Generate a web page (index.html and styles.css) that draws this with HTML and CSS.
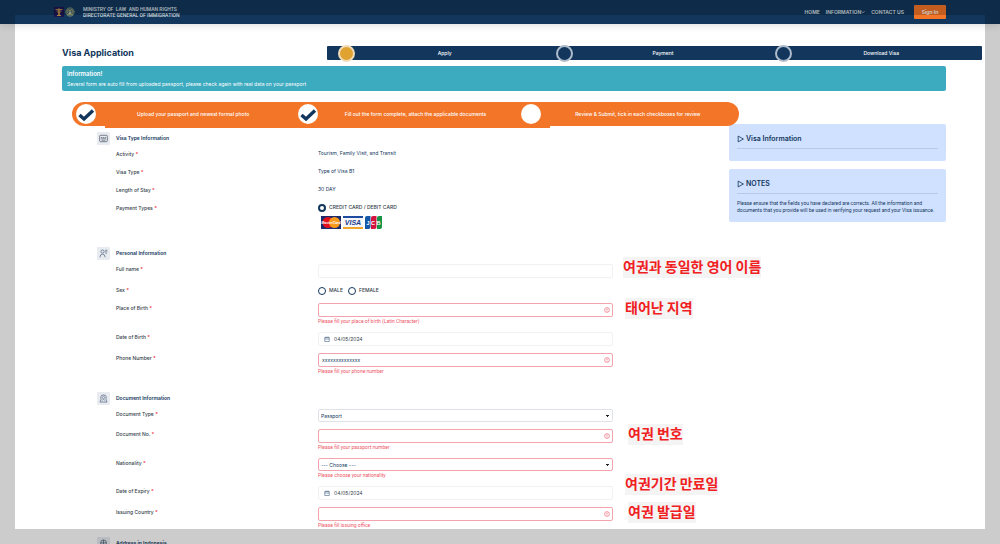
FILE: index.html
```html
<!DOCTYPE html>
<html lang="en">
<head>
<meta charset="utf-8">
<title>Visa Application</title>
<link rel="stylesheet" href="styles.css">
</head>
<body>
<svg class="defs" aria-hidden="true">
  <symbol id="alert" viewBox="0 0 12 12"><circle cx="6" cy="6" r="4.8" fill="none" stroke="#ee5566" stroke-width="1.2"/><path d="M6 3.2v3.4M6 7.6v1.3" stroke="#ee5566" stroke-width="1.4"/></symbol>
  <symbol id="calendar" viewBox="0 0 12 12"><path d="M1.5 3h9v8h-9zM1.5 6h9M4 1v3M8 1v3" fill="none" stroke="#33547a" stroke-width="1.1"/></symbol>
  <symbol id="check" viewBox="0 0 20 20"><path d="M3.500 11l4.500 4L17 6.500" fill="none" stroke="#12365c" stroke-width="3.400"/></symbol>
  <symbol id="play" viewBox="0 0 12 12"><path d="M2 1v10l9-5z" fill="none" stroke="#12365c" stroke-width="1.4" stroke-linejoin="round"/></symbol>
</svg>

<header class="topbar">
  <a class="brand" href="#">
    <svg class="crest" viewBox="0 0 20 20"><rect width="20" height="20" fill="#1c1650"/><path d="M10 2v16M3 5h14M5 8h10M6 17h8M7 11h6" stroke="#a5824a" stroke-width="2"/><path d="M8 5h4v12H8z" fill="#a5824a"/></svg>
    <svg class="crest" viewBox="0 0 20 20"><circle cx="10" cy="10" r="8.500" fill="#46636a" stroke="#7d8c74" stroke-width="1.500"/><path d="M4 9l3-4 3 3 3-3 3 4-3 4H7zM4 15h12" fill="none" stroke="#aaa86c" stroke-width="1.800"/><path d="M8 9h4v5H8z" fill="#a9b9ae"/></svg>
    <span class="brand-name">MINISTRY OF&nbsp; LAW&nbsp; AND HUMAN RIGHTS<br>DIRECTORATE GENERAL OF IMMIGRATION</span>
  </a>
  <nav class="nav">
    <a href="#">HOME</a>
    <a href="#" class="nav-drop">INFORMATION<svg viewBox="0 0 8 8"><path d="M1 2.500l3 3 3-3" fill="none" stroke="#c5ced8" stroke-width="1.600"/></svg></a>
    <a href="#">CONTACT US</a>
    <button class="signin" type="button">Sign In</button>
  </nav>
</header>

<main class="page">
  <div class="heading">
    <h1>Visa Application</h1>
    <ol class="stages">
      <li><i class="dot active"></i><span>Apply</span></li>
      <li><i class="dot"></i><span>Payment</span></li>
      <li><i class="dot"></i><span>Download Visa</span></li>
    </ol>
  </div>

  <div class="alert" role="status">
    <strong>Information!</strong>
    <p>Several form are auto fill from uploaded passport, please check again with real data on your passport</p>
  </div>

  <ol class="wizard">
    <li><i class="knob"><svg viewBox="0 0 20 20"><use href="#check"/></svg></i><span>Upload your passport and newest formal photo</span></li>
    <li><i class="knob"><svg viewBox="0 0 20 20"><use href="#check"/></svg></i><span>Fill out the form complete, attach the applicable documents</span></li>
    <li><i class="knob"></i><span>Review &amp; Submit, tick in each checkboxes for review</span></li>
  </ol>

  <div class="columns">
    <form class="form">
      <section class="group">
        <h2><span class="badge"><svg viewBox="0 0 14 14"><rect x="1" y="2" width="12" height="10" rx="1.500" fill="none" stroke="#555f70" stroke-width="1.200"/><path d="M3 5.500h2M6 5.500h2M9 5.500h2M3 7.500h8" stroke="#555f70" stroke-width="1.200"/><path d="M4 9.800h6" stroke="#555f70"/></svg></span>Visa Type Information</h2>
        <div class="facts">
          <div class="row"><span class="label">Activity <b>*</b></span><span class="value">Tourism, Family Visit, and Transit</span></div>
          <div class="row"><span class="label">Visa Type <b>*</b></span><span class="value">Type of Visa B1</span></div>
          <div class="row"><span class="label">Length of Stay <b>*</b></span><span class="value">30 DAY</span></div>
          <div class="row">
            <span class="label">Payment Types <b>*</b></span>
            <div class="payment">
              <label class="choice"><input type="radio" name="pay" checked>CREDIT CARD / DEBIT CARD</label>
              <div class="cards">
                <svg class="card" viewBox="0 0 40 26"><rect width="40" height="26" fill="#1b2a6b"/><circle cx="14" cy="13" r="11" fill="#e0101c"/><circle cx="27" cy="13" r="11" fill="#f79a1c"/><text x="20" y="16" text-anchor="middle" class="card-mc">MasterCard</text></svg>
                <svg class="card" viewBox="0 0 40 26"><rect width="40" height="26" fill="#f4f6fa"/><path d="M0 0h40v4H0z" fill="#1e4ba0"/><path d="M0 22h40v4H0z" fill="#f0a52c"/><text x="20" y="18" text-anchor="middle" class="card-visa">VISA</text></svg>
                <svg class="card card-narrow" viewBox="0 0 34 26"><path d="M4 0h7v22q0 4-4 4H0V4q0-4 4-4z" fill="#1558a8"/><path d="M16 0h7v22q0 4-4 4h-7V4q0-4 4-4z" fill="#d21340"/><path d="M28 0h6v22q0 4-4 4h-6V4q0-4 4-4z" fill="#189447"/><text x="17" y="18" text-anchor="middle" class="card-jcb">J C B</text></svg>
              </div>
            </div>
          </div>
        </div>
      </section>

      <section class="group">
        <h2><span class="badge"><svg viewBox="0 0 14 14"><circle cx="5.500" cy="4" r="2.500" fill="none" stroke="#4b6079" stroke-width="1.100"/><path d="M1.500 13q0-5 4-5t4 5M9.500 2h3.500M9.500 4.500h3.500M10 6.800h2" fill="none" stroke="#4b6079" stroke-width="1.100"/></svg></span>Personal Information</h2>
        <div class="fields">
          <div class="row"><label class="label" for="name">Full name <b>*</b></label>
            <div class="control"><input class="box" id="name" type="text"><mark class="hint hint-low">여권과 동일한 영어 이름</mark></div></div>
          <div class="row"><span class="label">Sex <b>*</b></span>
            <div class="choices"><label class="choice"><input type="radio" name="sex">MALE</label><label class="choice"><input type="radio" name="sex">FEMALE</label></div></div>
          <div class="row"><label class="label" for="birthplace">Place of Birth <b>*</b></label>
            <div class="control invalid"><input class="box" id="birthplace" type="text"><svg class="mark"><use href="#alert"/></svg><p>Please fill your place of birth (Latin Character)</p><mark class="hint">태어난 지역</mark></div></div>
          <div class="row"><label class="label" for="birthdate">Date of Birth <b>*</b></label>
            <div class="control date"><svg class="cal"><use href="#calendar"/></svg><input class="box" id="birthdate" type="text" value="04/05/2024"></div></div>
          <div class="row"><label class="label" for="phone">Phone Number <b>*</b></label>
            <div class="control invalid"><input class="box" id="phone" type="text" value="xxxxxxxxxxxxxx"><svg class="mark"><use href="#alert"/></svg><p>Please fill your phone number</p></div></div>
        </div>
      </section>

      <section class="group last">
        <h2><span class="badge"><svg viewBox="0 0 14 14"><path d="M3 9V4q0-2.500 4-2.500T11 4v5M1.500 12.500h11M3 9l-1.500 3.500M11 9l1.500 3.500" fill="none" stroke="#5a6b86" stroke-width="1.200"/><circle cx="7" cy="5.500" r="1.800" fill="none" stroke="#5a6b86"/><path d="M4.500 10q2.500-3 5 0" fill="none" stroke="#5a6b86"/></svg></span>Document Information</h2>
        <div class="fields">
          <div class="row"><label class="label" for="doctype">Document Type <b>*</b></label>
            <div class="control"><select class="box" id="doctype"><option>Passport</option></select></div></div>
          <div class="row"><label class="label" for="docno">Document No. <b>*</b></label>
            <div class="control invalid"><input class="box" id="docno" type="text"><svg class="mark"><use href="#alert"/></svg><p>Please fill your passport number</p><mark class="hint hint-b">여권 번호</mark></div></div>
          <div class="row"><label class="label" for="nation">Nationality <b>*</b></label>
            <div class="control invalid"><select class="box" id="nation"><option>--- Choose ---</option></select><p>Please choose your nationality</p></div></div>
          <div class="row"><label class="label" for="expiry">Date of Expiry <b>*</b></label>
            <div class="control date"><svg class="cal"><use href="#calendar"/></svg><input class="box" id="expiry" type="text" value="04/05/2024"><mark class="hint hint-c">여권기간 만료일</mark></div></div>
          <div class="row"><label class="label" for="issuer">Issuing Country <b>*</b></label>
            <div class="control invalid"><input class="box" id="issuer" type="text"><svg class="mark"><use href="#alert"/></svg><p>Please fill issuing office</p><mark class="hint hint-b">여권 발급일</mark></div></div>
        </div>
      </section>

      <section class="group">
        <h2><span class="badge"><svg viewBox="0 0 14 14"><circle cx="7" cy="6" r="4.500" fill="none" stroke="#4b6079" stroke-width="1.200"/><path d="M7 1.500v11M2.500 6h9M4 13h6" stroke="#4b6079" stroke-width="1.200"/></svg></span>Address in Indonesia</h2>
      </section>
    </form>

    <aside class="side">
      <section class="note"><h3><svg><use href="#play"/></svg>Visa Information</h3></section>
      <section class="note"><h3><svg><use href="#play"/></svg>NOTES</h3>
        <p>Please ensure that the fields you have declared are corrects. All the information and documents that you provide will be used in verifying your request and your Visa issuance.</p></section>
    </aside>
  </div>
</main>
<div class="frame" aria-hidden="true"></div>
</body>
</html>
```

FILE: styles.css
```css
:root {
  --navy: #12365c;
  --orange: #f37527;
  --red: #ee5566;
}
* { box-sizing: border-box; margin: 0; padding: 0; }
html { overflow: hidden; height: 100%; }
body {
  height: 100%;
  overflow: hidden;
  background: #fff;
  color: var(--navy);
  font: 5px/8px Inter, "Noto Sans CJK KR", sans-serif;
}
ol { list-style: none; }
a { color: inherit; text-decoration: none; }
input, select, button { font: inherit; color: inherit; }
.defs { position: absolute; width: 0; height: 0; }

.topbar {
  display: flex;
  justify-content: space-between;
  align-items: center;
  height: 24px;
  padding: 0 54px;
  background: var(--navy);
  color: #dde3ea;
  box-shadow: 0 1px 8px rgba(0, 0, 0, .15);
}
.brand { display: flex; align-items: center; gap: 1px; }
.crest { width: 10px; height: 10px; }
.brand-name { margin-left: 7px; font-family: Roboto, sans-serif; line-height: 6px; font-weight: 500; }
.nav { display: flex; align-items: center; gap: 6px; font-weight: 600; }
.nav-drop { display: flex; align-items: center; }
.nav svg { width: 4px; height: 4px; }
.signin {
  width: 32px;
  height: 14px;
  margin-left: 4px;
  border: 0;
  border-radius: 1px;
  background: var(--orange);
  color: #fff;
  font-weight: 600;
}

.page { padding: 21px 54px 0 62px; }
.heading { display: flex; align-items: center; justify-content: space-between; margin-right: -36px; }
h1 { font-size: 9px; line-height: 16px; font-weight: 700; }
.stages {
  display: grid;
  grid-template-columns: repeat(3, 1fr);
  width: 71.2%;
  height: 14px;
  border-radius: 1px;
  background: var(--navy);
  color: #fff;
  font-weight: 500;
}
.stages li { display: flex; align-items: center; height: 14px; padding: 0 11px; }
.stages span, .wizard span { flex: 1; text-align: center; }
.dot { width: 17px; height: 17px; margin: -2px 0; border: 2px solid #aebccb; border-radius: 50%; background: var(--navy); }
.dot.active { background: #e0a231; border-color: #f0dcb8; }

.alert { margin-top: 5px; padding: 3px 5px; border-radius: 2px; background: #3caabf; color: #fff; }
.alert strong { display: block; font-size: 6px; line-height: 9px; font-weight: 600; }
.alert p { line-height: 12px; margin-bottom: -2px; }

.wizard {
  position: relative;
  z-index: 1;
  display: grid;
  grid-template-columns: repeat(3, 1fr);
  margin: 11px 207px 0 10px;
  border-radius: 12px;
  background: var(--orange);
  color: #fff;
  font-weight: 500;
}
.wizard::after {
  content: "";
  position: absolute;
  left: 5%;
  top: 20px;
  width: 66.6%;
  height: 6px;
  background: var(--orange);
  z-index: -1;
}
.wizard li { display: flex; align-items: center; height: 24px; padding: 0 4px; }
.knob { width: 20px; height: 20px; border-radius: 50%; background: #fff; }
.knob svg { display: block; width: 20px; height: 20px; }

.columns { display: grid; grid-template-columns: minmax(0, 659fr) minmax(0, 217fr); gap: 8px; margin-top: -2px; }
.form { padding: 8px 108px 0 35px; }
.group { margin-bottom: 17px; }
.group.last { margin-bottom: 8px; }
h2 { display: flex; align-items: center; gap: 6px; font-size: 5px; line-height: 13px; font-weight: 600; }
.badge { display: grid; place-items: center; width: 13px; height: 13px; border-radius: 1px; background: #e8ebf0; }
.badge svg { width: 9px; height: 9px; }
.facts { margin-left: 19px; padding-bottom: 1px; }
.facts .row { min-height: 18px; line-height: 18px; }
.fields { display: grid; gap: 7px; margin: 4px 0 0 19px; }
.row { display: grid; grid-template-columns: 202fr 295fr; }
.label { color: #333d49; line-height: 10px; font-weight: 500; }
.facts .label { line-height: 18px; }
.label b { color: #f03040; }
.value { line-height: 17px; }

.choices { display: flex; gap: 5px; height: 11px; }
.choice { display: flex; align-items: center; gap: 3px; line-height: 11px; color: #333d49; font-weight: 500; }
.payment .choice { line-height: 17px; }
.choice input { appearance: none; width: 8px; height: 8px; border: 1px solid var(--navy); border-radius: 50%; background: #fff; }
.choice input:checked { border-width: 2px; }
.cards { display: flex; gap: 2px; margin-left: 3px; }
.card { width: 20px; height: 13px; }
.card-narrow { width: 17px; }
.card text { font-family: "Liberation Sans", sans-serif; font-weight: 700; font-style: italic; fill: #fff; }
.card .card-mc { font-size: 7px; }
.card .card-visa { font-size: 14px; fill: #1c3c8c; }
.card .card-jcb { font-size: 11px; font-style: normal; }

.control { position: relative; }
.box {
  appearance: none;
  display: block;
  width: 100%;
  height: 14px;
  padding: 0 3px;
  border: 1px solid #f0f1f3;
  border-radius: 2px;
  background: #fff;
}
select.box {
  height: 13px;
  padding: 0 2px;
  border-color: #dfe3e8;
  background:
    linear-gradient(#222, #222) no-repeat right 3px top 5px / 3px 1px,
    linear-gradient(#222, #222) no-repeat right 4px top 6px / 1px 1px,
    #fff;
}
.invalid .box { border-color: #f2a3ae; }
.invalid p { font-family: Roboto, sans-serif; line-height: 9px; margin-bottom: -1px; color: var(--red); }
.mark { position: absolute; top: 4px; right: 3px; width: 6px; height: 6px; }
.cal { position: absolute; top: 4px; left: 6px; width: 6px; height: 6px; }
.date .box { padding-left: 15px; color: #333d49; }
.hint {
  position: absolute;
  top: -5px;
  left: calc(100% + 12px);
  padding-bottom: 2px;
  background: #f4f4f4;
  color: #f0201f;
  font: 700 14px/19px "Noto Sans CJK KR", sans-serif;
  white-space: nowrap;
}
.hint-low { top: -7px; left: calc(100% + 10px); }
.hint-b { left: calc(100% + 15px); }
.hint-c { top: -12px; }

.side { display: grid; gap: 8px; align-content: start; }
.note { min-height: 37px; padding: 9px 8px 8px; border-radius: 2px; background: #d0e1ff; }
.note h3 { display: flex; align-items: center; gap: 2px; padding-bottom: 3px; border-bottom: 1px solid #b5c9e8; font-size: 7px; line-height: 12px; font-weight: 600; }
.note svg { width: 7px; height: 8px; }
.note p { margin: 6px 0 0; font-family: Roboto, sans-serif; line-height: 7px; }

.frame { position: fixed; inset: 0; z-index: 10; border: 15px solid rgba(0, 0, 0, .2); pointer-events: none; }
```
